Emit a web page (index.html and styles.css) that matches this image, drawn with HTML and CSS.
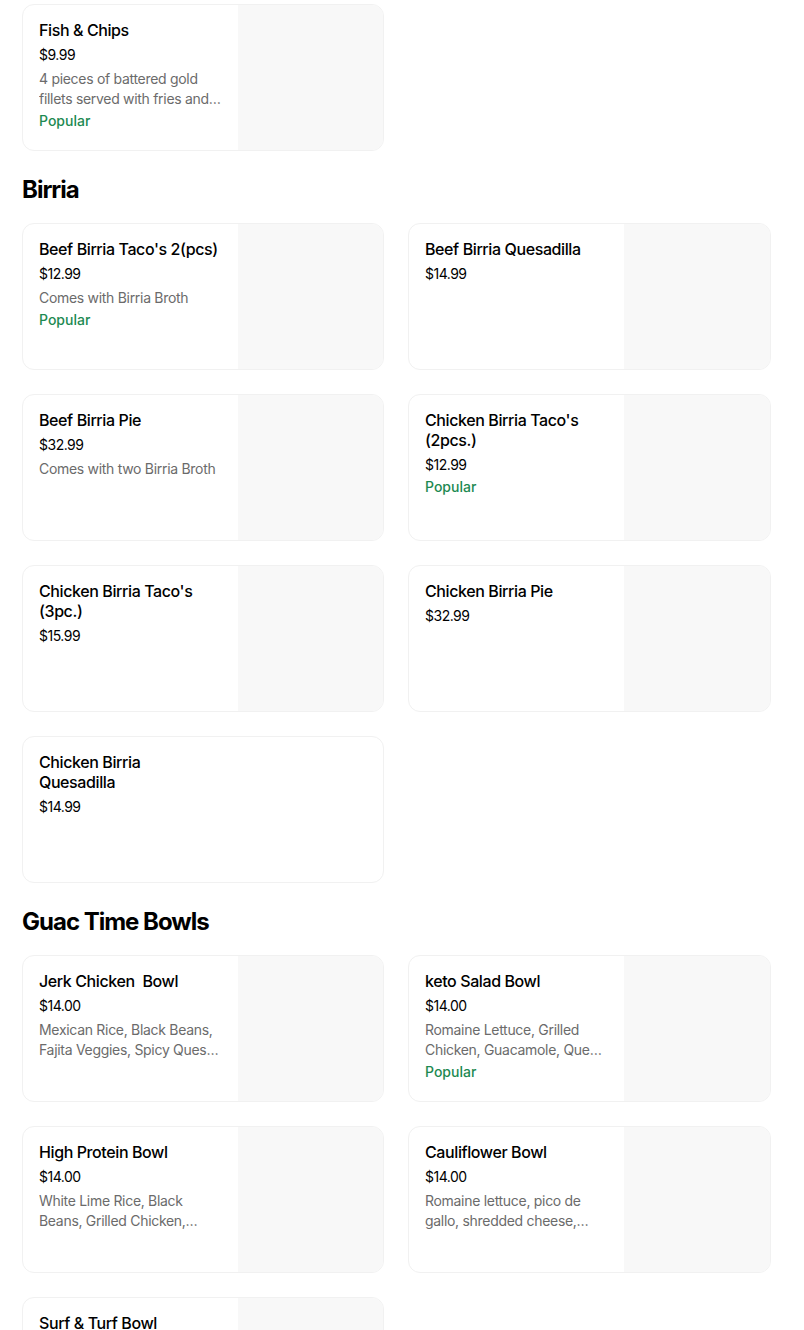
FILE: index.html
```html
<!DOCTYPE html>
<html>
<head>
<meta charset="utf-8">
<link rel="stylesheet" href="styles.css">
</head>
<body>
<main class="menu">
  <section class="section first">
    <div class="grid">
      <div class="card">
        <div class="info">
          <div class="title">Fish &amp; Chips</div>
          <div class="price">$9.99</div>
          <div class="desc">4 pieces of battered gold fillets served with fries and coleslaw</div>
          <div class="popular">Popular</div>
        </div>
        <div class="thumb"></div>
      </div>
    </div>
  </section>

  <section class="section">
    <h2 class="heading">Birria</h2>
    <div class="grid">
      <div class="card">
        <div class="info">
          <div class="title">Beef Birria Taco's 2(pcs)</div>
          <div class="price">$12.99</div>
          <div class="desc">Comes with Birria Broth</div>
          <div class="popular">Popular</div>
        </div>
        <div class="thumb"></div>
      </div>
      <div class="card">
        <div class="info">
          <div class="title">Beef Birria Quesadilla</div>
          <div class="price">$14.99</div>
        </div>
        <div class="thumb"></div>
      </div>
      <div class="card">
        <div class="info">
          <div class="title">Beef Birria Pie</div>
          <div class="price">$32.99</div>
          <div class="desc">Comes with two Birria Broth</div>
        </div>
        <div class="thumb"></div>
      </div>
      <div class="card">
        <div class="info">
          <div class="title">Chicken Birria Taco's (2pcs.)</div>
          <div class="price">$12.99</div>
          <div class="popular">Popular</div>
        </div>
        <div class="thumb"></div>
      </div>
      <div class="card">
        <div class="info">
          <div class="title">Chicken Birria Taco's (3pc.)</div>
          <div class="price">$15.99</div>
        </div>
        <div class="thumb"></div>
      </div>
      <div class="card">
        <div class="info">
          <div class="title">Chicken Birria Pie</div>
          <div class="price">$32.99</div>
        </div>
        <div class="thumb"></div>
      </div>
      <div class="card">
        <div class="info">
          <div class="title">Chicken Birria Quesadilla</div>
          <div class="price">$14.99</div>
        </div>
      </div>
    </div>
  </section>

  <section class="section">
    <h2 class="heading">Guac Time Bowls</h2>
    <div class="grid">
      <div class="card">
        <div class="info">
          <div class="title">Jerk Chicken &nbsp;Bowl</div>
          <div class="price">$14.00</div>
          <div class="desc">Mexican Rice, Black Beans, Fajita Veggies, Spicy Queso, Jerk Chicken</div>
        </div>
        <div class="thumb"></div>
      </div>
      <div class="card">
        <div class="info">
          <div class="title">keto Salad Bowl</div>
          <div class="price">$14.00</div>
          <div class="desc">Romaine Lettuce, Grilled Chicken, Guacamole, Queso Fresco</div>
          <div class="popular">Popular</div>
        </div>
        <div class="thumb"></div>
      </div>
      <div class="card">
        <div class="info">
          <div class="title">High Protein Bowl</div>
          <div class="price">$14.00</div>
          <div class="desc">White Lime Rice, Black Beans, Grilled Chicken, Steak</div>
        </div>
        <div class="thumb"></div>
      </div>
      <div class="card">
        <div class="info">
          <div class="title">Cauliflower Bowl</div>
          <div class="price">$14.00</div>
          <div class="desc">Romaine lettuce, pico de gallo, shredded cheese, cauliflower rice</div>
        </div>
        <div class="thumb"></div>
      </div>
      <div class="card">
        <div class="info">
          <div class="title">Surf &amp; Turf Bowl</div>
          <div class="price">$16.00</div>
        </div>
        <div class="thumb"></div>
      </div>
    </div>
  </section>
</main>
</body>
</html>
```

FILE: styles.css
```css
html, body {
  margin: 0;
  padding: 0;
  background: #ffffff;
}

body {
  font-family: Inter, "Noto Sans", "Liberation Sans", sans-serif;
  color: #000000;
}

.menu {
  padding: 4px 22px 0 22px;
}

.section {
  margin-top: 23px;
}

.section.first {
  margin-top: 0;
}

.heading {
  margin: 0 0 17px 0;
  font-size: 24px;
  line-height: 32px;
  font-weight: 700;
  letter-spacing: -1px;
}

.grid {
  display: grid;
  grid-template-columns: 362px 363px;
  column-gap: 24px;
  row-gap: 24px;
}

.card {
  display: flex;
  height: 147px;
  box-sizing: border-box;
  border: 1px solid #f1f1f1;
  border-radius: 12px;
  overflow: hidden;
  background: #ffffff;
}

.info {
  width: 215px;
  flex: none;
  box-sizing: border-box;
  padding: 15px 16px 16px 16px;
}

.thumb {
  flex: 1;
  background: #f8f8f8;
}

.title {
  padding-right: 4px;
  font-size: 16px;
  line-height: 20px;
  font-weight: 500;
  letter-spacing: -0.4px;
  color: #000000;
}

.price {
  margin-top: 5px;
  font-size: 14px;
  line-height: 20px;
  font-weight: 400;
  letter-spacing: -0.5px;
  color: #000000;
}

.desc {
  margin-top: 4px;
  font-size: 14px;
  line-height: 20px;
  color: #6b6b6b;
  letter-spacing: -0.3px;
  display: -webkit-box;
  -webkit-line-clamp: 2;
  -webkit-box-orient: vertical;
  overflow: hidden;
}

.popular {
  margin-top: 2px;
  font-size: 14px;
  line-height: 20px;
  font-weight: 500;
  color: #1d8a52;
}
```
